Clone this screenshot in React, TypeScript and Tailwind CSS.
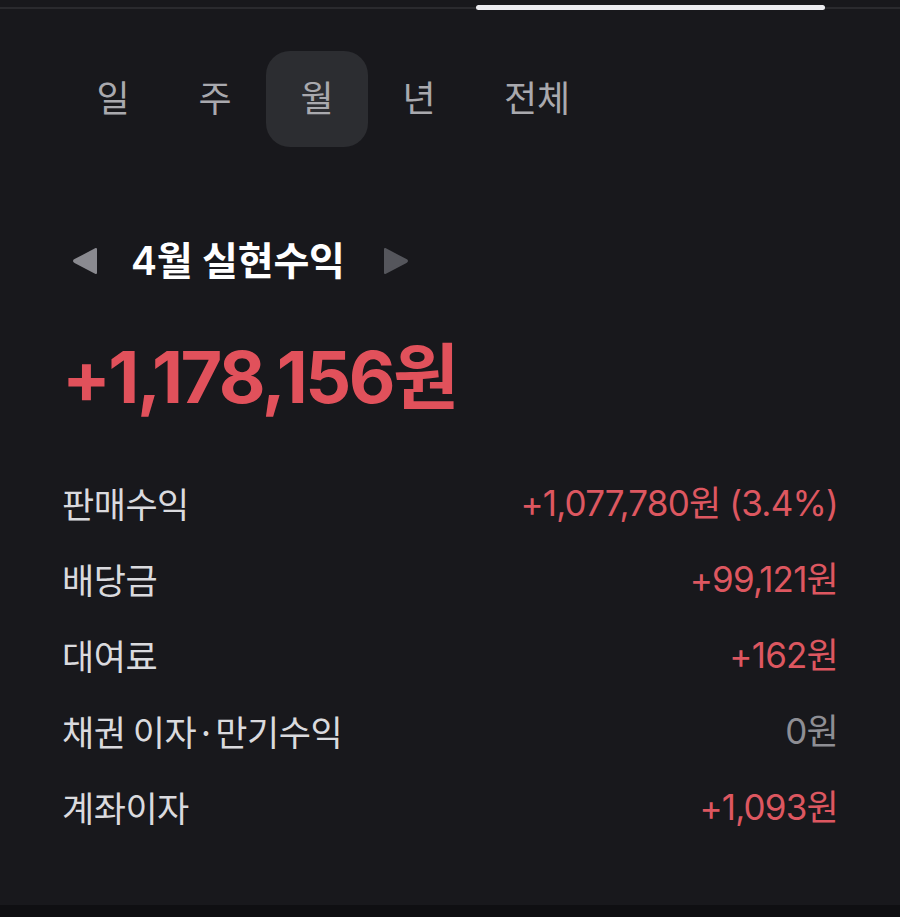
import React, { useState } from "react";

const tabs = ["일", "주", "월", "년", "전체"];

const rows = [
  { label: "판매수익", value: "+1,077,780원 (3.4%)", tone: "red" },
  { label: "배당금", value: "+99,121원", tone: "red" },
  { label: "대여료", value: "+162원", tone: "red" },
  { label: "채권 이자·만기수익", value: "0원", tone: "gray" },
  { label: "계좌이자", value: "+1,093원", tone: "red" },
];

export default function App() {
  const [active, setActive] = useState(2);

  return (
    <div
      className="w-[900px] h-[917px] bg-[#18181c] flex flex-col overflow-hidden"
      style={{ fontFamily: 'Inter, "Noto Sans CJK KR", sans-serif' }}
    >
      {/* top scroll bar */}
      <div className="h-[2px] mt-[7px] bg-[#2a2a2e] relative">
        <div className="absolute left-[476px] top-[-2px] w-[349px] h-[5px] rounded-full bg-[#ececf0]" />
      </div>

      {/* period tabs */}
      <div className="flex items-center pl-[62px] mt-[42px] h-[96px]">
        {tabs.map((t, i) => (
          <button
            key={t}
            onClick={() => setActive(i)}
            className={
              "h-[96px] flex items-center justify-center rounded-[24px] text-[36px] text-[#a9a9ae] " +
              (t === "전체" ? "w-[134px]" : "w-[102px]") +
              (i === active ? " bg-[#2c2d31]" : "")
            }
          >
            {t}
          </button>
        ))}
      </div>

      {/* month header */}
      <div className="flex items-center mt-[94px] pl-[70px] h-[40px]">
        <svg width="30" height="30" viewBox="0 0 30 30">
          <path d="M26 3 L26 27 L5 16 Q3 15 5 14 Z" fill="#8a8a90" strokeLinejoin="round" stroke="#8a8a90" strokeWidth="2" />
        </svg>
        <span className="ml-[31px] text-[39px] font-semibold text-white tracking-[-0.2px]">4월 실현수익</span>
        <svg className="ml-[36px]" width="30" height="30" viewBox="0 0 30 30">
          <path d="M4 3 L4 27 L25 16 Q27 15 25 14 Z" fill="#55565c" strokeLinejoin="round" stroke="#55565c" strokeWidth="2" />
        </svg>
      </div>

      {/* total */}
      <div className="pl-[62px] mt-[60px] text-[72px] font-bold text-[#e1515b] tracking-[-2.5px] leading-none">
        +1,178,156원
      </div>

      {/* breakdown */}
      <div className="mt-[52px] px-[62px] flex flex-col">
        {rows.map((r) => (
          <div key={r.label} className="flex items-center justify-between h-[76px]">
            <span
              className="text-[35px] text-[#dadade] tracking-[-0.5px]"
              style={{ fontFamily: '"Noto Sans CJK KR", sans-serif' }}
            >
              {r.label}
            </span>
            <span
              className={
                "text-[35px] tracking-[-0.8px] " +
                (r.tone === "red" ? "text-[#dd5760]" : "text-[#8e8e94]")
              }
            >
              {r.value}
            </span>
          </div>
        ))}
      </div>

      <div className="flex-1" />
      <div className="h-[12px] bg-[#0f0f12]" />
    </div>
  );
}
